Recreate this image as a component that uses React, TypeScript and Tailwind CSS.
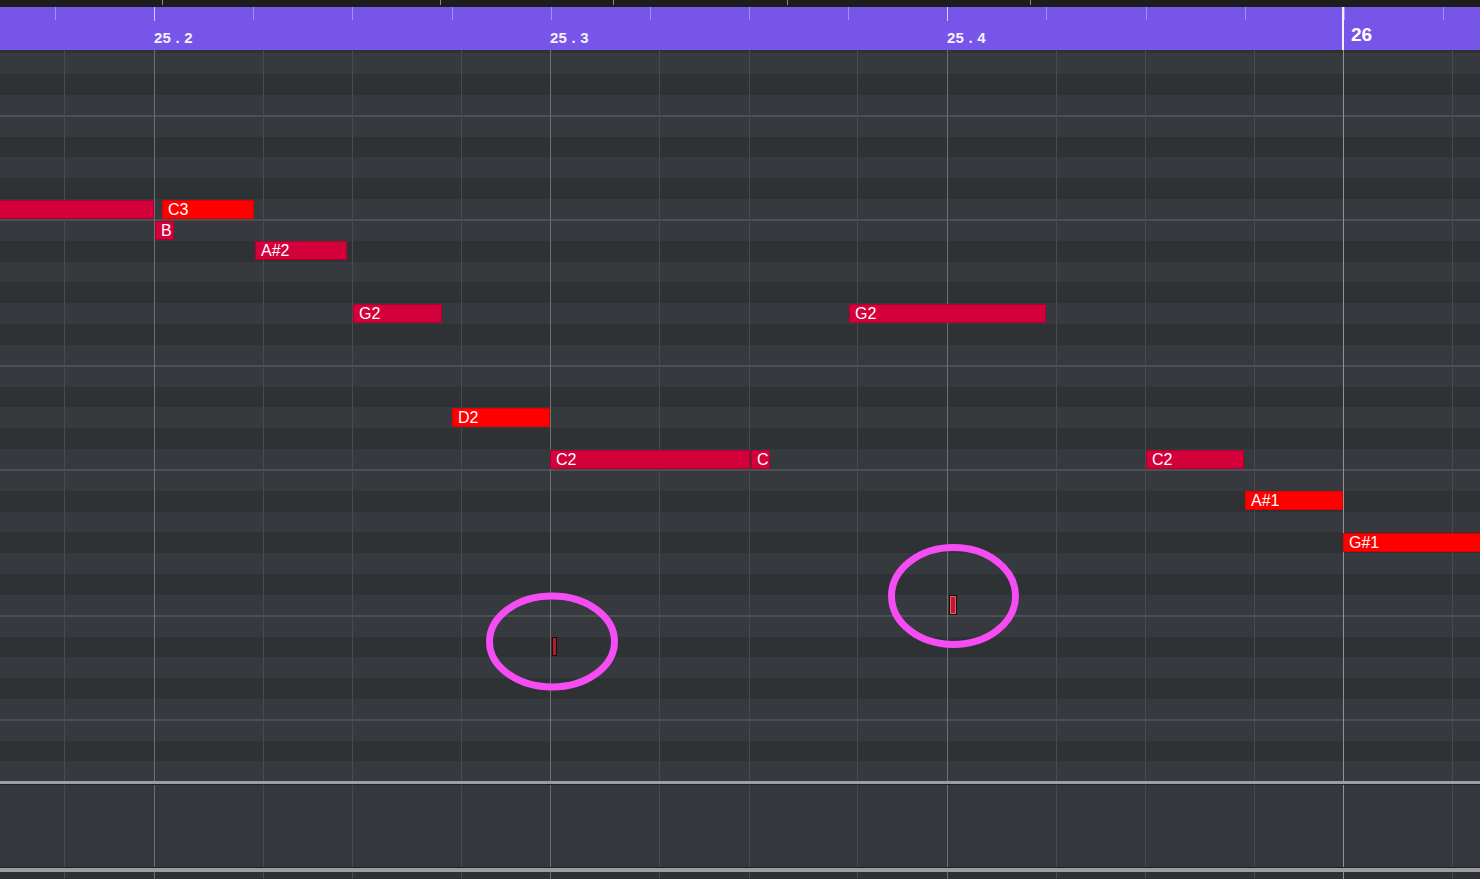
import React from "react";

const ROW_H = 250 / 12;
const C3_TOP = 149.17; // relative to grid top (page y 50)
const rowTop = (s: number) => C3_TOP - s * ROW_H;

const BLACK = new Set([1, 3, 6, 8, 10]);

const VLINES = [64, 154, 263, 352, 461, 550, 659, 749, 857, 947, 1056, 1145, 1254, 1343, 1452];
const BEATS = new Set([154, 550, 947]);

const RULER_TICKS = Array.from({ length: 15 }, (_, k) => Math.round(55 + 99.14 * k));

type Note = { x: number; w: number; s: number; red: boolean; label: string };
const NOTES: Note[] = [
  { x: -2, w: 156, s: 0, red: false, label: "" },
  { x: 162, w: 92, s: 0, red: true, label: "C3" },
  { x: 155, w: 19, s: -1, red: false, label: "B" },
  { x: 255, w: 92, s: -2, red: false, label: "A#2" },
  { x: 353, w: 89, s: -5, red: false, label: "G2" },
  { x: 452, w: 98, s: -10, red: true, label: "D2" },
  { x: 550, w: 200, s: -12, red: false, label: "C2" },
  { x: 751, w: 19, s: -12, red: false, label: "C2" },
  { x: 849, w: 197, s: -5, red: false, label: "G2" },
  { x: 1146, w: 98, s: -12, red: false, label: "C2" },
  { x: 1245, w: 98, s: -14, red: true, label: "A#1" },
  { x: 1343, w: 140, s: -16, red: true, label: "G#1" },
];

const rows = Array.from({ length: 36 }, (_, i) => 8 - i);

function VLinesLayer() {
  return (
    <>
      {VLINES.map((x) => (
        <div
          key={x}
          className={
            "absolute top-0 bottom-0 w-px " +
            (x === 1343 ? "bg-[#8f9397]" : BEATS.has(x) ? "bg-[#6c7074]" : "bg-[#474b4f]")
          }
          style={{ left: x }}
        />
      ))}
    </>
  );
}

function rowClass(s: number) {
  const pc = ((s % 12) + 12) % 12;
  let c = "h-[20.8333px] shrink-0 " + (BLACK.has(pc) ? "bg-[#2f3235]" : "bg-[#36393d]");
  if (pc === 0 || pc === 5) c += " shadow-[inset_0_-1px_0_#4c5054]";
  if (pc === 11 || pc === 4) c += " shadow-[inset_0_1px_0_#4c5054]";
  return c;
}

export default function App() {
  return (
    <div
      className="relative w-[1480px] h-[879px] overflow-hidden bg-[#34373b] flex flex-col"
      style={{ fontFamily: '"Liberation Sans", Arial, sans-serif' }}
    >
      {/* top strip */}
      <div className="relative h-[7px] bg-[#1d1d1d] shrink-0">
        {[162, 440, 613, 787, 1030].map((x) => (
          <div key={x} className="absolute top-0 h-[5px] w-px bg-[#8a8a8a]" style={{ left: x }} />
        ))}
      </div>

      {/* ruler */}
      <div className="relative h-[43px] bg-[#7655e8] shrink-0">
        {RULER_TICKS.map((x) => (
          <div
            key={x}
            className={
              "absolute top-0 w-px " +
              ([154, 550, 947].includes(x) ? "h-[14px] bg-[#d9d0ff]" : "h-[13px] bg-[#a391f2]")
            }
            style={{ left: x }}
          />
        ))}
        <div className="absolute top-0 bottom-0 left-[1342px] w-[2px] bg-[#f2f0ff]" />
        {[
          { x: 154, t: "25 . 2" },
          { x: 550, t: "25 . 3" },
          { x: 947, t: "25 . 4" },
        ].map((l) => (
          <div
            key={l.x}
            className="absolute top-[22px] text-[15px] leading-[17px] font-bold text-[#f4f1ff] tracking-[0.2px] whitespace-pre"
            style={{ left: l.x }}
          >
            {l.t}
          </div>
        ))}
        <div className="absolute left-[1351px] top-[17px] text-[19px] leading-[22px] font-bold text-white">
          26
        </div>
      </div>

      {/* note grid */}
      <div className="relative h-[731px] shrink-0 overflow-hidden bg-[#36393d]">
        <div className="flex flex-col -mt-[17.5px]">
          {rows.map((s) => (
            <div key={s} className={rowClass(s)} />
          ))}
        </div>
        <VLinesLayer />
        {NOTES.map((n, i) => (
          <div
            key={i}
            className={
              "absolute h-[19px] overflow-hidden whitespace-nowrap border text-white text-[16px] leading-[17px] pl-[5px] " +
              (n.red ? "bg-[#ff0000] border-[#e00000]" : "bg-[#d3003b] border-[#b00032]")
            }
            style={{ left: n.x, width: n.w, top: rowTop(n.s) + 0.5 }}
          >
            {n.label}
          </div>
        ))}
        <div className="absolute left-[552px] top-[587px] w-[5px] h-[19px] bg-[#b81830] border border-[#1a0a0a]" />
        <div className="absolute left-[949px] top-[545px] w-[8px] h-[20px] bg-[#c0182e] border border-[#1a0a0a] shadow-[inset_0_0_0_1px_#e06070]" />
      </div>

      {/* separator */}
      <div className="h-[4px] shrink-0 bg-[#9a9ea2] border-b border-[#222427]" />

      {/* velocity lane */}
      <div className="relative h-[82px] shrink-0 bg-[#34373b]">
        <VLinesLayer />
      </div>
      <div className="h-[1px] shrink-0 bg-[#1f2124]" />
      <div className="h-[4px] shrink-0 bg-[#9a9ea2]" />
      <div className="relative flex-1 bg-[#2e3134]">
        <VLinesLayer />
      </div>

      {/* annotation ellipses */}
      <svg className="absolute left-0 top-0 pointer-events-none" width={1480} height={879}>
        <ellipse cx={552} cy={641.5} rx={62.5} ry={45.5} fill="none" stroke="#f64cf3" strokeWidth={7} />
        <ellipse cx={953.5} cy={596} rx={62} ry={48.5} fill="none" stroke="#f64cf3" strokeWidth={7} />
      </svg>
    </div>
  );
}
